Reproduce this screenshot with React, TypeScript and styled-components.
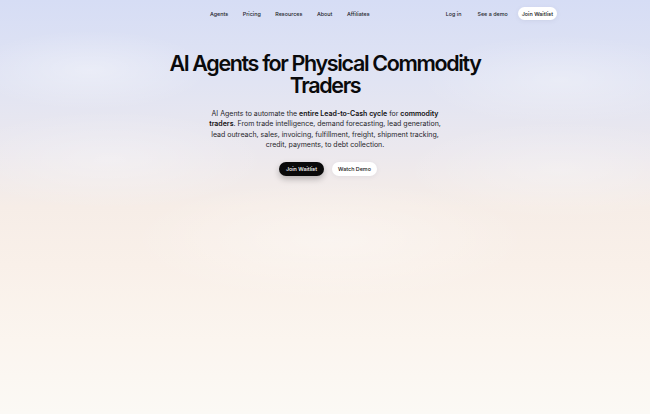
import { createGlobalStyle, styled } from "styled-components";

const GlobalStyle = createGlobalStyle`
    html, body {
        margin: 0;
        padding: 0;
    }
    body {
        font-family: Inter, "Noto Sans", "Liberation Sans", sans-serif;
        color: #0b0b0c;
        -webkit-font-smoothing: antialiased;
    }
    * {
        box-sizing: border-box;
    }
`

const Page = styled.div`
    display: flex;
    flex-direction: column;
    min-height: 100vh;
    background:
        radial-gradient(ellipse 120px 40px at 90px 70px, rgba(255, 255, 255, 0.35), transparent),
        radial-gradient(ellipse 140px 45px at 560px 80px, rgba(255, 255, 255, 0.3), transparent),
        radial-gradient(ellipse 200px 60px at 330px 240px, rgba(255, 255, 255, 0.35), transparent),
        radial-gradient(ellipse 160px 50px at 110px 160px, rgba(255, 255, 255, 0.28), transparent),
        radial-gradient(ellipse 160px 50px at 560px 170px, rgba(255, 255, 255, 0.25), transparent),
        linear-gradient(180deg, #d6ddf5 0%, #e1e4f3 20%, #ebe8ee 36%, #f6ede7 50%, #f9f0e9 64%, #fbf5ef 82%, #fbf9f5 100%);
`

const Nav = styled.nav`
    display: flex;
    align-items: center;
    justify-content: space-between;
    height: 27px;
    padding: 0 93px 0 210px;
`

const NavLinks = styled.div`
    display: flex;
    align-items: center;
    gap: 14.5px;
`

const NavLink = styled.a`
    font-size: 5.4px;
    font-weight: 500;
    color: #1d1f2a;
    text-decoration: none;
`

const NavRight = styled.div`
    display: flex;
    align-items: center;
    gap: 16px;

    & > :last-child {
        margin-left: -6px;
    }
`

const PillButton = styled.a<{ $dark?: boolean; $small?: boolean }>`
    display: inline-flex;
    align-items: center;
    justify-content: center;
    height: ${(p) => (p.$small ? "13px" : "14.5px")};
    min-width: ${(p) => (p.$small ? "39px" : "45px")};
    padding: 0 ${(p) => (p.$small ? "4px" : "6px")};
    border-radius: 999px;
    font-size: 5.4px;
    font-weight: 500;
    text-decoration: none;
    background: ${(p) => (p.$dark ? "#0a0a0a" : "#ffffff")};
    color: ${(p) => (p.$dark ? "#ffffff" : "#141414")};
    box-shadow: ${(p) =>
        p.$dark
            ? "0 3px 6px rgba(0, 0, 0, 0.25)"
            : "0 1px 4px rgba(120, 120, 150, 0.12)"};
`

const Hero = styled.section`
    display: flex;
    flex-direction: column;
    align-items: center;
    padding-top: 25px;
`

const Title = styled.h1`
    margin: 0;
    font-size: 21.5px;
    line-height: 22px;
    font-weight: 600;
    letter-spacing: -0.063em;
    text-align: center;
    max-width: 330px;
    color: #0a0a0b;
`

const Lead = styled.p`
    margin: 13px 0 0;
    max-width: 232px;
    font-size: 7px;
    line-height: 10.4px;
    text-align: center;
    color: #26262b;

    strong {
        font-weight: 600;
        color: #111;
    }
`

const Actions = styled.div`
    display: flex;
    gap: 8px;
    margin-top: 11px;
    padding-left: 6px;
`

const navItems = ["Agents", "Pricing", "Resources", "About", "Affiliates"];

export default function App() {
    return (
        <>
            <GlobalStyle />
            <Page>
                <Nav>
                    <NavLinks>
                        {navItems.map((item) => (
                            <NavLink key={item} href="#">{item}</NavLink>
                        ))}
                    </NavLinks>
                    <NavRight>
                        <NavLink href="#">Log in</NavLink>
                        <NavLink href="#">See a demo</NavLink>
                        <PillButton href="#" $small>Join Waitlist</PillButton>
                    </NavRight>
                </Nav>
                <Hero>
                    <Title>AI Agents for Physical Commodity Traders</Title>
                    <Lead>
                        AI Agents to automate the <strong>entire Lead-to-Cash cycle</strong> for{" "}
                        <strong>commodity traders</strong>. From trade intelligence, demand forecasting,
                        lead generation, lead outreach, sales, invoicing, fulfillment, freight, shipment
                        tracking, credit, payments, to debt collection.
                    </Lead>
                    <Actions>
                        <PillButton href="#" $dark>Join Waitlist</PillButton>
                        <PillButton href="#">Watch Demo</PillButton>
                    </Actions>
                </Hero>
            </Page>
        </>
    );
}
